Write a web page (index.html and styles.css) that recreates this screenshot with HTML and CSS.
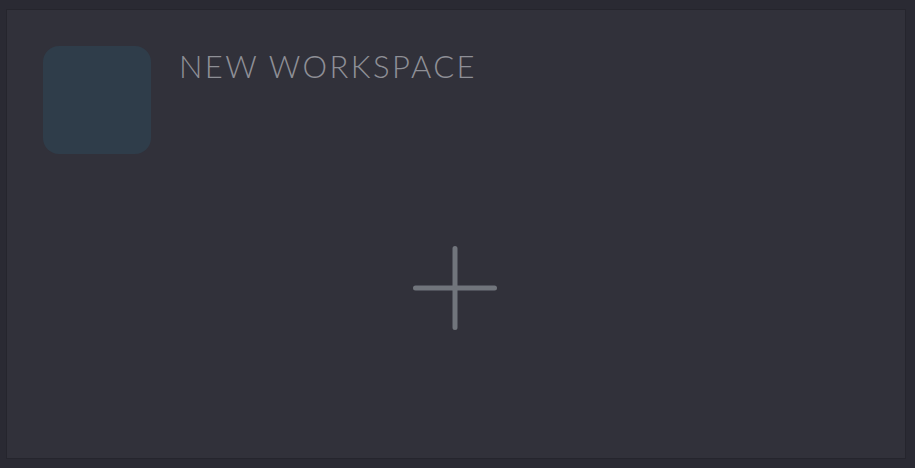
FILE: index.html
```html
<!DOCTYPE html>
<html>
<head>
<meta charset="utf-8">
<link rel="stylesheet" href="styles.css">
</head>
<body>
<div class="card">
  <div class="header">
    <div class="thumb"></div>
    <div class="title">NEW WORKSPACE</div>
  </div>
  <div class="add">
    <svg width="86" height="86" viewBox="0 0 86 86">
      <path d="M43 3.5V82.5M3.5 43H82.5" stroke="#71757c" stroke-width="5" stroke-linecap="round" fill="none"/>
    </svg>
  </div>
</div>
</body>
</html>
```

FILE: styles.css
```css
html, body {
  margin: 0;
  padding: 0;
  background: #2a2a33;
  width: 915px;
  height: 468px;
  overflow: hidden;
}
body {
  padding: 9px 9px 9px 6px;
  box-sizing: border-box;
}
.card {
  width: 900px;
  height: 450px;
  box-sizing: border-box;
  background: #31313a;
  border: 1px solid #25252d;
  display: flex;
  flex-direction: column;
  padding: 36px 36px 0 36px;
}
.header {
  display: flex;
  align-items: flex-start;
  gap: 28px;
}
.thumb {
  width: 108px;
  height: 108px;
  border-radius: 16px;
  background: #2f3d4a;
  flex: none;
}
.title {
  font-family: "Lato", "Open Sans", sans-serif;
  font-weight: 300;
  font-size: 31px;
  letter-spacing: 2.45px;
  color: #8e8f96;
  line-height: 1;
  margin-top: 5px;
}
.add {
  display: flex;
  justify-content: center;
  margin-top: 91px;
  margin-left: -3px;
}
.add svg {
  display: block;
}
```
